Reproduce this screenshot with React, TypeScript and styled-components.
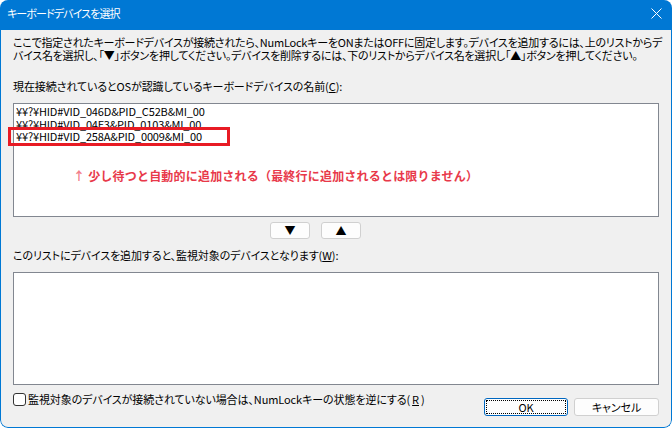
import React from 'react'
import styled, { createGlobalStyle } from 'styled-components'

const GlobalStyle = createGlobalStyle`
  html, body {
    margin: 0;
    padding: 0;
    background: #ffffff;
  }
  body {
    font-family: "Noto Sans CJK JP", "Noto Sans", sans-serif;
    font-size: 11px;
    letter-spacing: -0.1px;
    font-feature-settings: "palt";
    color: #000;
  }
`

const devices = [
  '¥¥?¥HID#VID_046D&PID_C52B&MI_00',
  '¥¥?¥HID#VID_04F3&PID_0103&MI_00',
  '¥¥?¥HID#VID_258A&PID_0009&MI_00',
]

const App = () => {
  return (
    <>
      <GlobalStyle />
      <Window>
        <TitleBar>
          <Title>キーボードデバイスを選択</Title>
          <CloseButton>
            <svg width="11" height="11" viewBox="0 0 11 11">
              <path d="M0.5 0.5 L10.5 10.5 M10.5 0.5 L0.5 10.5" stroke="#fff" strokeWidth="1" fill="none" />
            </svg>
          </CloseButton>
        </TitleBar>
        <Body>
          <Description>
            <Line>ここで指定されたキーボードデバイスが接続されたら、NumLockキーをONまたはOFFに固定します。デバイスを追加するには、上のリストからデ</Line>
            <Line>バイス名を選択し、「▼」ボタンを押してください。デバイスを削除するには、下のリストからデバイス名を選択し「▲」ボタンを押してください。</Line>
          </Description>
          <Label gap={18}>現在接続されているとOSが認識しているキーボードデバイスの名前(<u>C</u>):</Label>
          <ListBox height={114}>
            {devices.map(d => (
              <ListItem key={d}>{d}</ListItem>
            ))}
            <Highlight />
            <Note>
              <NoteArrow>↑</NoteArrow> 少し待つと自動的に追加される（最終行に追加されるとは限りません）
            </Note>
          </ListBox>
          <MoveRow>
            <MoveButton>▼</MoveButton>
            <MoveButton>▲</MoveButton>
          </MoveRow>
          <Label gap={10}>このリストにデバイスを追加すると、監視対象のデバイスとなります(<u>W</u>):</Label>
          <ListBox height={113} />
          <Footer>
            <CheckLabel>
              <CheckBox />
              監視対象のデバイスが接続されていない場合は、NumLockキーの状態を逆にする(<u>R</u>)
            </CheckLabel>
            <Actions>
              <DialogButton primary>OK</DialogButton>
              <DialogButton>キャンセル</DialogButton>
            </Actions>
          </Footer>
        </Body>
      </Window>
    </>
  )
}

const Window = styled.div`
  width: 672px;
  height: 428px;
  display: flex;
  flex-direction: column;
  border-radius: 8px;
  overflow: hidden;
`

const TitleBar = styled.div`
  height: 30px;
  flex: none;
  background: #0078d4;
  display: flex;
  align-items: center;
  justify-content: space-between;
  padding: 0 10px 4px 7px;
  box-sizing: border-box;
`

const Title = styled.div`
  color: #fff;
  font-size: 11px;
  letter-spacing: -0.9px;
  line-height: 14px;
`

const CloseButton = styled.div`
  display: flex;
  width: 11px;
  height: 11px;
`

const Body = styled.div`
  flex: 1;
  background: #f0f0f0;
  border: 1px solid #0078d4;
  border-top: none;
  border-radius: 0 0 8px 8px;
  padding: 0 12px;
  display: flex;
  flex-direction: column;
`

const Description = styled.div`
  margin-top: 6px;
  line-height: 13px;
  letter-spacing: -0.24px;
`

const Line = styled.div`
  white-space: nowrap;
`

const Label = styled.div<{ gap: number }>`
  line-height: 13px;
  white-space: nowrap;
  margin: ${p => p.gap}px 0 10px;
`

const ListBox = styled.div<{ height: number }>`
  position: relative;
  height: ${p => p.height}px;
  flex: none;
  box-sizing: border-box;
  background: #fff;
  border: 1px solid #828790;
  padding: 1px 2px;
`

const ListItem = styled.div`
  font-size: 11px;
  letter-spacing: -0.15px;
  line-height: 12.5px;
  white-space: nowrap;
`

const Highlight = styled.div`
  position: absolute;
  left: -6px;
  top: 23px;
  width: 222px;
  height: 19px;
  box-sizing: border-box;
  border: 3px solid #e81b24;
`

const Note = styled.div`
  margin: 26px 0 0 57px;
  color: #e8394a;
  font-weight: 700;
  font-size: 12px;
  letter-spacing: 0.2px;
  font-feature-settings: normal;
  line-height: 14px;
  white-space: nowrap;
`

const NoteArrow = styled.span`
  color: #f27d8a;
`

const MoveRow = styled.div`
  display: flex;
  gap: 11px;
  margin: 5px 0 0 257px;
`

const MoveButton = styled.div`
  width: 40px;
  height: 17px;
  box-sizing: border-box;
  background: #fdfdfd;
  border: 1px solid #d0d0d0;
  border-radius: 3px;
  display: flex;
  align-items: center;
  justify-content: center;
  font-size: 11px;
  line-height: 1;
`

const Footer = styled.div`
  display: flex;
  justify-content: space-between;
  align-items: flex-start;
`

const CheckLabel = styled.label`
  display: flex;
  align-items: center;
  gap: 2px;
  margin-top: 8px;
  white-space: nowrap;
  line-height: 13px;
`

const CheckBox = styled.span`
  width: 13px;
  height: 13px;
  box-sizing: border-box;
  border: 1px solid #333;
  border-radius: 3px;
  background: #fff;
`

const Actions = styled.div`
  display: flex;
  gap: 6px;
  margin-top: 13px;
`

const DialogButton = styled.div<{ primary?: boolean }>`
  position: relative;
  width: ${p => (p.primary ? 84 : 85)}px;
  height: 18px;
  box-sizing: border-box;
  background: #fdfdfd;
  border: 1px solid ${p => (p.primary ? '#0067c0' : '#d0d0d0')};
  border-radius: 3px;
  display: flex;
  align-items: center;
  justify-content: center;
  font-size: 11px;
  line-height: 1;

  ${p =>
    p.primary &&
    `
    &::after {
      content: "";
      position: absolute;
      inset: 1px;
      border: 1px dotted #000;
    }
  `}
`

export default App
